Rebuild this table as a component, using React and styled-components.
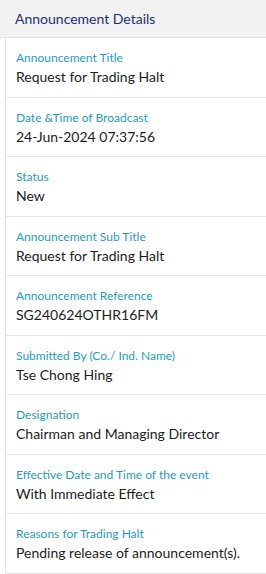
import React from "react";
import styled, { createGlobalStyle } from "styled-components";

const GlobalStyle = createGlobalStyle`
  body {
    margin: 0;
    background: #fff;
    font-family: Lato, "Open Sans", sans-serif;
  }
`;

const Panel = styled.section`
  width: 266px;
`;

const Header = styled.div`
  height: 38px;
  box-sizing: border-box;
  padding: 0 15px;
  display: flex;
  align-items: center;
  background: #f2f2f2;
  border-bottom: 1px solid #e6e6e6;
  color: #1d2f6f;
  font-size: 14px;
`;

const List = styled.dl`
  margin: 0 0 0 5px;
  border-left: 1px solid #e6e6e6;
`;

const Row = styled.div`
  padding: 11px 10px 9.5px;
  border-bottom: 1px solid #e6e6e6;
`;

const Label = styled.dt`
  font-size: 12px;
  line-height: 17px;
  color: #1f9cc3;
`;

const Value = styled.dd`
  margin: 0;
  font-size: 14px;
  line-height: 21px;
  color: #1c1c1c;
`;

const details = [
  ["Announcement Title", "Request for Trading Halt"],
  ["Date &Time of Broadcast", "24-Jun-2024 07:37:56"],
  ["Status", "New"],
  ["Announcement Sub Title", "Request for Trading Halt"],
  ["Announcement Reference", "SG240624OTHR16FM"],
  ["Submitted By (Co./ Ind. Name)", "Tse Chong Hing"],
  ["Designation", "Chairman and Managing Director"],
  ["Effective Date and Time of the event", "With Immediate Effect"],
  ["Reasons for Trading Halt", "Pending release of announcement(s)."],
];

export default function App() {
  return (
    <>
      <GlobalStyle />
      <Panel>
        <Header>Announcement Details</Header>
        <List>
          {details.map(([label, value]) => (
            <Row key={label}>
              <Label>{label}</Label>
              <Value>{value}</Value>
            </Row>
          ))}
        </List>
      </Panel>
    </>
  );
}
